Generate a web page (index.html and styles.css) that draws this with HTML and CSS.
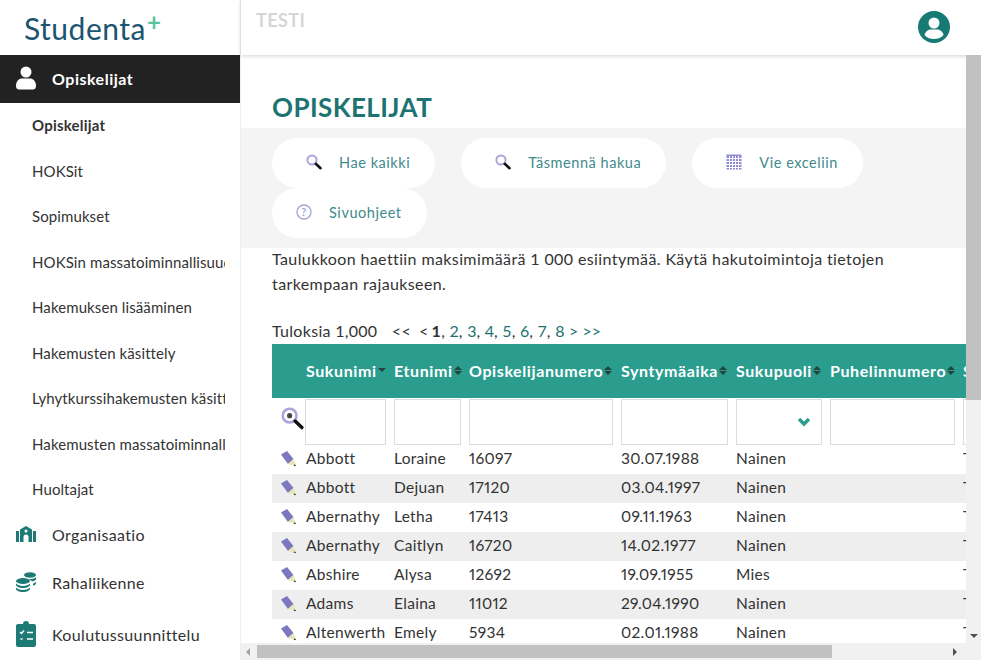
FILE: index.html
```html
<!DOCTYPE html>
<html lang="fi">
<head>
<meta charset="utf-8">
<title>Studenta+</title>
<link rel="stylesheet" href="styles.css">
</head>
<body>
<svg class="defs" width="0" height="0">
  <symbol id="pencil" viewBox="0 0 16 16"><path d="M0 3.500 6 0l6.500 8L7 13z" fill="#7b78c0"/><path d="M7 13l5.500-5 2.800 7.300z" fill="#e8e6b8"/><path d="m13.700 13.200 1.600 2.100-2.700-.6z" fill="#333"/></symbol>
  <symbol id="glass" viewBox="0 0 16 16"><circle cx="6" cy="6" r="4.600" fill="#fff" stroke="#a9a5dc" stroke-width="2"/><path d="m9.800 9.800 4.700 4.400" stroke="#111" stroke-width="2.600" stroke-linecap="round"/></symbol>
</svg>
<div class="app">
  <aside class="side">
    <div class="logo"><span class="logo-text">Studenta</span><span class="logo-plus">+</span></div>
    <div class="nav-main nav-active">
      <svg class="nav-icon" viewBox="0 0 20 24"><circle cx="10" cy="6" r="5.500" fill="#fff"/><path d="M0 20c0-5 3-7.500 6-7.500h8c3 0 6 2.500 6 7.500 0 2.500-1.500 3.500-3 3.500H3c-1.500 0-3-1-3-3.500z" fill="#fff"/></svg>
      <span>Opiskelijat</span>
    </div>
    <nav class="subnav">
      <a class="sub sub-current">Opiskelijat</a>
      <a class="sub">HOKSit</a>
      <a class="sub">Sopimukset</a>
      <a class="sub">HOKSin massatoiminnallisuudet</a>
      <a class="sub">Hakemuksen lisääminen</a>
      <a class="sub">Hakemusten käsittely</a>
      <a class="sub">Lyhytkurssihakemusten käsittely</a>
      <a class="sub">Hakemusten massatoiminnallisuudet</a>
      <a class="sub">Huoltajat</a>
    </nav>
    <div class="nav-main nav-org">
      <svg class="nav-icon" viewBox="0 0 20 16"><path d="M0 5h3v11H0zM17 5h3v11h-3zM4 3.500 10 0l6 3.500V16h-3.500v-5a2.500 2.500 0 0 0-5 0v5H4z" fill="#1d7a75"/><circle cx="10" cy="5" r="1.500" fill="#fff"/></svg>
      <span>Organisaatio</span>
    </div>
    <div class="nav-main nav-money">
      <svg class="nav-icon" viewBox="0 0 20 20"><g fill="#1d7a75"><ellipse cx="14" cy="3" rx="6" ry="2.800"/><path d="M14 7c2.500 0 4.800-.7 6-1.800V7c0 1-1.500 2-4 2.500C15 8 13 7.300 11 7.100c1 0 2 0 3-.1zM17 11.500c1.500-.4 3-1.300 3-2.300v2c0 1-1.300 2-3 2.300z"/><ellipse cx="7" cy="9" rx="7" ry="3"/><path d="M0 11.500C1.200 13 4 14 7 14s5.800-1 7-2.500V13c0 1.500-3 3-7 3s-7-1.500-7-3zM0 15.500C1.200 17 4 18 7 18s5.800-1 7-2.500V17c0 1.500-3 3-7 3s-7-1.500-7-3z"/></g></svg>
      <span>Rahaliikenne</span>
    </div>
    <div class="nav-main nav-plan">
      <svg class="nav-icon nav-icon-tall" viewBox="0 0 20 26"><path d="M2 3h5a3 3 0 0 1 6 0h5a2 2 0 0 1 2 2v19a2 2 0 0 1-2 2H2a2 2 0 0 1-2-2V5a2 2 0 0 1 2-2z" fill="#1d7a75"/><path d="m4 11 1.500 1.500L8 9.500M11 11.500h6M4.500 18h2M11 18h6" stroke="#fff" stroke-width="1.500" fill="none"/></svg>
      <span>Koulutussuunnittelu</span>
    </div>
  </aside>
  <div class="main">
    <header class="top">
      <span class="top-title">TESTI</span>
      <svg class="avatar" viewBox="0 0 32 32"><circle cx="16" cy="16" r="16" fill="#177a75"/><circle cx="16" cy="12" r="5.500" fill="#fff"/><path d="M6.500 24c1-4 4-5.500 6.500-5.500h6c2.500 0 5.500 1.500 6.500 5.500-2 2.500-5.500 4-9.500 4s-7.500-1.500-9.500-4z" fill="#fff"/></svg>
    </header>
    <div class="view">
      <div class="view-row">
        <div class="scroll">
          <h1 class="title">OPISKELIJAT</h1>
          <div class="toolbar">
            <a class="btn"><svg class="btn-icon"><use href="#glass"/></svg>Hae kaikki</a>
            <a class="btn btn-mid"><svg class="btn-icon"><use href="#glass"/></svg>Täsmennä hakua</a>
            <a class="btn"><svg class="btn-icon" viewBox="0 0 16 16"><rect x="0.500" y="0.500" width="15" height="15" fill="#8f8bd4"/><path d="M0 4.500h16M0 7.500h16M0 10.500h16M0 13.500h16M3.500 2v14M6.500 2v14M9.500 2v14M12.500 2v14" stroke="#fff" stroke-width="1"/></svg>Vie exceliin</a>
            <a class="btn btn-help"><svg class="btn-icon" viewBox="0 0 16 16"><circle cx="8" cy="8" r="7" fill="none" stroke="#a9a5dc" stroke-width="1.400"/><text class="help-mark" x="8" y="12" text-anchor="middle">?</text></svg>Sivuohjeet</a>
          </div>
          <p class="notice">Taulukkoon haettiin maksimimäärä 1 000 esiintymää. Käytä hakutoimintoja tietojen tarkempaan rajaukseen.</p>
          <div class="pager">Tuloksia 1,000 <span class="pager-nav">&lt;&lt;</span><span class="pager-prev">&lt;</span><b>1</b>, <a>2</a>, <a>3</a>, <a>4</a>, <a>5</a>, <a>6</a>, <a>7</a>, <a>8</a> <a>&gt;</a> <a>&gt;&gt;</a></div>
          <div class="table">
            <div class="row head">
              <span></span>
              <span class="th">Sukunimi<i class="sort sort-down"></i></span>
              <span class="th">Etunimi<i class="sort"></i></span>
              <span class="th">Opiskelijanumero<i class="sort"></i></span>
              <span class="th">Syntymäaika<i class="sort"></i></span>
              <span class="th">Sukupuoli<i class="sort"></i></span>
              <span class="th">Puhelinnumero<i class="sort"></i></span>
              <span class="th">Sähköposti</span>
            </div>
            <div class="row filter">
              <svg class="filter-icon" viewBox="0 0 16 16"><circle cx="6" cy="6" r="4.800" fill="#fff" stroke="#a9a5dc" stroke-width="1.800"/><circle cx="6" cy="6" r="1.800" fill="#444"/><path d="m9.800 9.800 4.700 4.500" stroke="#111" stroke-width="2.400" stroke-linecap="round"/></svg>
              <input class="fi" aria-label="Sukunimi">
              <input class="fi" aria-label="Etunimi">
              <input class="fi" aria-label="Opiskelijanumero">
              <input class="fi" aria-label="Syntymäaika">
              <div class="fi fi-select"><svg class="chev" viewBox="0 0 14 10"><path d="m2 2 5 5 5-5" fill="none" stroke="#2a9d8f" stroke-width="3.500"/></svg></div>
              <input class="fi" aria-label="Puhelinnumero">
              <input class="fi" aria-label="Sähköposti">
            </div>
            <div class="row data"><svg class="pen"><use href="#pencil"/></svg><span>Abbott</span><span>Loraine</span><span>16097</span><span>30.07.1988</span><span>Nainen</span><span></span><span>Tampere</span></div>
            <div class="row data alt"><svg class="pen"><use href="#pencil"/></svg><span>Abbott</span><span>Dejuan</span><span>17120</span><span>03.04.1997</span><span>Nainen</span><span></span><span>Tampere</span></div>
            <div class="row data"><svg class="pen"><use href="#pencil"/></svg><span>Abernathy</span><span>Letha</span><span>17413</span><span>09.11.1963</span><span>Nainen</span><span></span><span>Tampere</span></div>
            <div class="row data alt"><svg class="pen"><use href="#pencil"/></svg><span>Abernathy</span><span>Caitlyn</span><span>16720</span><span>14.02.1977</span><span>Nainen</span><span></span><span>Tampere</span></div>
            <div class="row data"><svg class="pen"><use href="#pencil"/></svg><span>Abshire</span><span>Alysa</span><span>12692</span><span>19.09.1955</span><span>Mies</span><span></span><span>Tampere</span></div>
            <div class="row data alt"><svg class="pen"><use href="#pencil"/></svg><span>Adams</span><span>Elaina</span><span>11012</span><span>29.04.1990</span><span>Nainen</span><span></span><span>Tampere</span></div>
            <div class="row data"><svg class="pen"><use href="#pencil"/></svg><span>Altenwerth</span><span>Emely</span><span>5934</span><span>02.01.1988</span><span>Nainen</span><span></span><span>Tampere</span></div>
          </div>
        </div>
        <div class="vbar">
          <div class="vthumb"></div>
          <div class="vspace"></div>
          <i class="arrow arrow-down"></i>
        </div>
      </div>
      <div class="hbar">
        <i class="arrow arrow-left"></i>
        <div class="hthumb"></div>
        <i class="arrow arrow-right"></i>
      </div>
    </div>
  </div>
</div>
</body>
</html>
```

FILE: styles.css
```css
* { box-sizing: border-box; }
html, body { margin: 0; height: 100%; overflow: hidden; }
body {
  font-family: "Lato", "Liberation Sans", sans-serif;
  color: #333;
  background: #fff;
}
.defs { display: block; height: 0; }
.app { display: flex; width: 981px; height: 660px; }

/* sidebar */
.side {
  flex: 0 0 241px;
  height: 660px;
  border-right: 1px solid #efefef;
  overflow: hidden;
}
.logo {
  height: 55px;
  padding: 9px 0 0 24px;
  display: flex;
  align-items: flex-start;
}
.logo-text {
  font-size: 30px;
  line-height: 38px;
  font-weight: 400;
  letter-spacing: 0.5px;
  color: #1b5470;
}
.logo-plus {
  font-size: 24px;
  line-height: 26px;
  font-weight: 700;
  color: #58c39f;
  margin-left: 1px;
}
.nav-main {
  display: flex;
  align-items: center;
  height: 48px;
  padding: 0 0 1px 16px;
  font-size: 16px;
  color: #333;
  letter-spacing: 0.35px;
}
.nav-icon { width: 20px; height: 20px; margin-right: 16px; flex: none; }
.nav-icon-tall { height: 26px; }
.nav-active { background: #222; color: #fff; font-weight: 700; letter-spacing: 0.5px; padding-bottom: 2px; }
.nav-active .nav-icon { height: 24px; }
.nav-org { height: 46px; padding-bottom: 3px; }
.nav-plan { height: 56px; }
.subnav { display: block; }
.sub {
  display: block;
  height: 45.5px;
  line-height: 44.5px;
  margin: 0 15px 0 32px;
  font-size: 15px;
  letter-spacing: 0.1px;
  white-space: nowrap;
  overflow: hidden;
  color: #333;
}
.sub-current { font-weight: 700; letter-spacing: 0.2px; }

/* main */
.main { flex: 1; min-width: 0; display: flex; flex-direction: column; height: 660px; }
.top {
  flex: 0 0 55px;
  display: flex;
  justify-content: space-between;
  padding: 10px 31px 0 15px;
  box-shadow: 0 1px 4px rgba(0,0,0,.18);
  position: relative;
  z-index: 1;
}
.top-title { font-size: 18px; line-height: 21px; font-weight: 700; letter-spacing: 0.4px; color: #d6d6d6; height: 21px; }
.avatar { width: 32px; height: 32px; margin-top: 1px; }
.view { flex: 1; min-height: 0; display: flex; flex-direction: column; }
.view-row { flex: 1; min-height: 0; display: flex; }
.scroll { flex: 1; min-width: 0; overflow: hidden; }

.title {
  margin: 0;
  height: 73px;
  padding: 37px 0 0 31px;
  font-size: 26px;
  line-height: 30px;
  font-weight: 700;
  letter-spacing: 0.4px;
  color: #1d7371;
}
.toolbar {
  background: #f4f4f4;
  padding: 10px 31px;
  display: flex;
  flex-wrap: wrap;
  column-gap: 26px;
}
.btn {
  display: flex;
  align-items: center;
  height: 50px;
  padding: 0 25px 2px 34px;
  background: #fff;
  border-radius: 25px;
  font-size: 14.500px;
  letter-spacing: 0.55px;
  color: #3f8a8c;
}
.btn-help { padding-left: 24px; }
.btn-icon { width: 16px; height: 16px; margin-right: 17px; flex: none; }
.help-mark { font: 700 11px "Lato", sans-serif; fill: #a9a5dc; }

.notice {
  margin: -2px 0 2px;
  padding: 0 60px 0 31px;
  font-size: 16px;
  line-height: 25px;
  letter-spacing: 0.39px;
  color: #333;
  height: 72px;
}
.pager {
  height: 24px;
  padding-left: 31px;
  font-size: 16px;
  line-height: 22px;
  letter-spacing: 0.3px;
  color: #333;
}
.pager a { color: #1d7371; letter-spacing: 0; }
.pager-nav { margin: 0 8px 0 10px; }
.pager-prev { margin-right: 3px; }

.table { width: 900px; }
.row {
  display: grid;
  grid-template-columns: 33px 89px 75px 152px 115px 94px 133px 209px;
  margin-left: 31px;
}
.head {
  height: 54px;
  background: #2a9d8f;
  align-items: center;
  padding-bottom: 2px;
}
.th {
  color: #fff;
  font-weight: 700;
  font-size: 16px;
  letter-spacing: 0.6px;
  white-space: nowrap;
  display: flex;
  align-items: center;
}
.th:nth-child(2), .data span:nth-of-type(1) { padding-left: 1px; }
.sort {
  display: inline-block;
  width: 0;
  height: 0;
  margin-left: 1px;
  border-left: 4px solid transparent;
  border-right: 4px solid transparent;
  border-top: 4px solid #21443f;
  position: relative;
  top: 3px;
}
.sort::before {
  content: "";
  position: absolute;
  left: -4px;
  top: -9px;
  border-left: 4px solid transparent;
  border-right: 4px solid transparent;
  border-bottom: 4px solid #21443f;
}
.sort-down { top: 0; }
.sort-down::before { display: none; }

.filter { height: 47px; padding-top: 1px; }
.filter-icon { width: 23px; height: 23px; margin: 8px 0 0 9px; }
.fi {
  display: block;
  height: 46px;
  width: calc(100% - 8.500px);
  border: 1.500px solid #dcdcdc;
  background: #fff;
  padding: 0;
  margin: 0;
  font: inherit;
}
.fi:last-child { width: 100%; }
.filter .fi:nth-child(7) { width: 125px; }
.fi-select { display: flex; align-items: center; justify-content: flex-end; padding-right: 10px; }
.chev { width: 14px; height: 10px; }

.data {
  height: 29px;
  align-items: center;
  font-size: 15.500px;
  letter-spacing: 0.3px;
  font-variant-numeric: proportional-nums;
  white-space: nowrap;
  padding-bottom: 3px;
}
.alt { background: #eee; }
.pen { width: 16px; height: 16px; margin: 2px 0 0 9px; }

/* scrollbars */
.vbar {
  flex: 0 0 15px;
  background: #f1f1f1;
  display: flex;
  flex-direction: column;
  align-items: center;
  position: relative;
  z-index: 2;
}
.vthumb { width: 15px; height: 345px; background: #c1c1c1; flex: none; }
.vspace { flex: 1; }
.arrow { display: block; width: 0; height: 0; flex: none; }
.arrow-down {
  border-left: 4px solid transparent;
  border-right: 4px solid transparent;
  border-top: 4px solid #505050;
  margin-bottom: 5px;
}
.hbar {
  flex: 0 0 17px;
  background: #f1f1f1;
  display: flex;
  align-items: center;
}
.arrow-left {
  border-top: 4px solid transparent;
  border-bottom: 4px solid transparent;
  border-right: 4px solid #a3a3a3;
  margin: 0 7px 0 5px;
}
.hthumb { width: 575px; height: 13px; background: #c1c1c1; }
.arrow-right {
  border-top: 4px solid transparent;
  border-bottom: 4px solid transparent;
  border-left: 4px solid #505050;
  margin-left: 121px;
}
```
